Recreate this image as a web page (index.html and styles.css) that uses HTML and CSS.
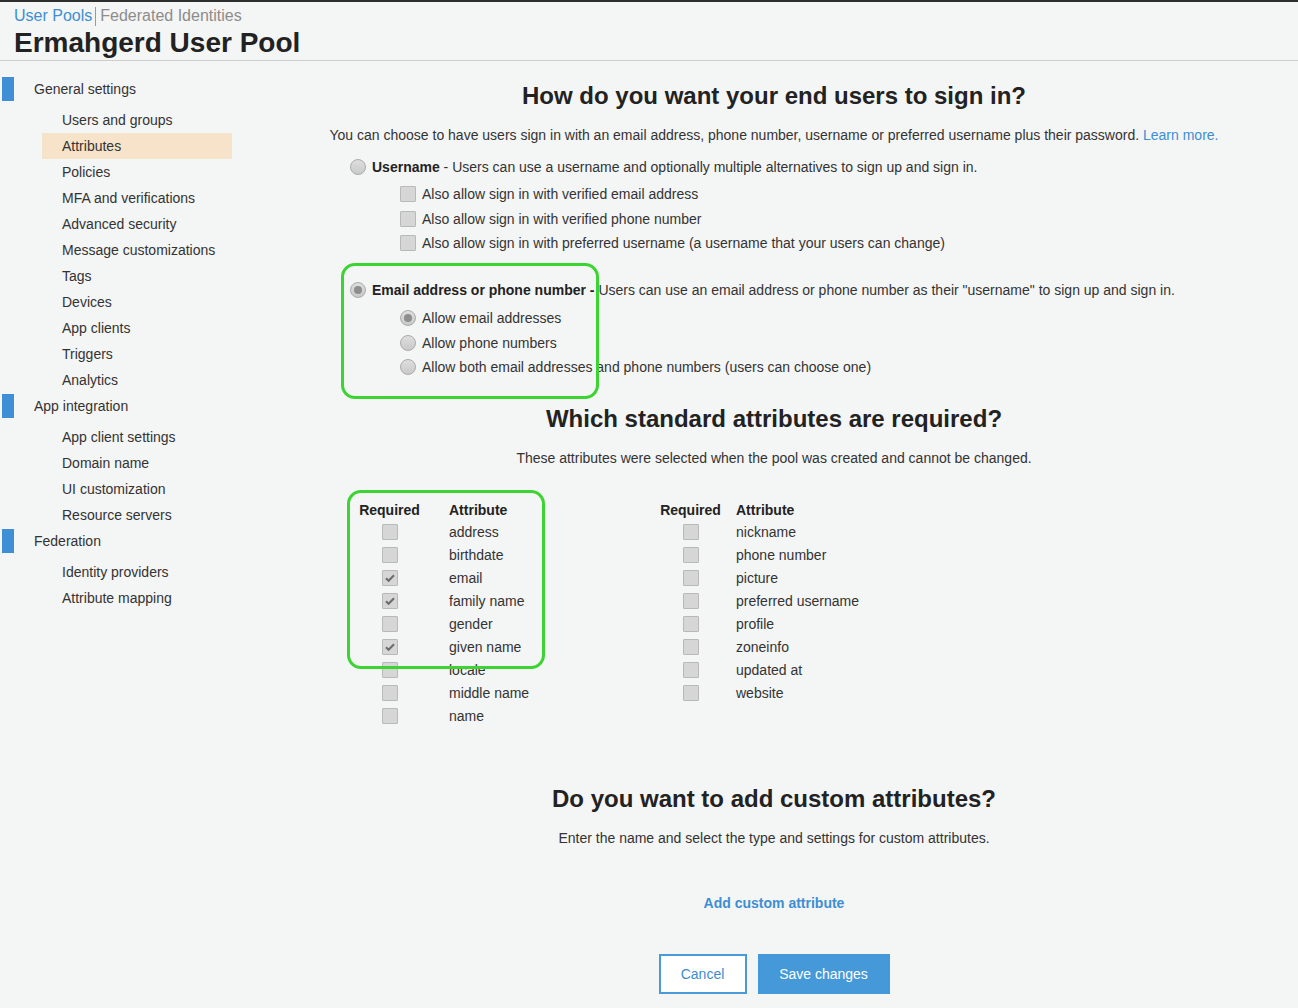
FILE: index.html
```html
<!DOCTYPE html>
<html lang="en">
<head>
<meta charset="utf-8">
<title>Ermahgerd User Pool - Attributes</title>
<link rel="stylesheet" href="styles.css">
</head>
<body>
<header class="top">
  <div class="tabs"><span class="tab-active">User Pools</span><span class="sep"></span><span class="tab">Federated Identities</span></div>
  <h1 class="title">Ermahgerd User Pool</h1>
</header>
<div class="layout">
  <nav class="sidebar">
    <div class="nav-head">General settings</div>
    <ul class="nav-list">
      <li class="nav-item">Users and groups</li>
      <li class="nav-item active">Attributes</li>
      <li class="nav-item">Policies</li>
      <li class="nav-item">MFA and verifications</li>
      <li class="nav-item">Advanced security</li>
      <li class="nav-item">Message customizations</li>
      <li class="nav-item">Tags</li>
      <li class="nav-item">Devices</li>
      <li class="nav-item">App clients</li>
      <li class="nav-item">Triggers</li>
      <li class="nav-item">Analytics</li>
    </ul>
    <div class="nav-head">App integration</div>
    <ul class="nav-list">
      <li class="nav-item">App client settings</li>
      <li class="nav-item">Domain name</li>
      <li class="nav-item">UI customization</li>
      <li class="nav-item">Resource servers</li>
    </ul>
    <div class="nav-head">Federation</div>
    <ul class="nav-list">
      <li class="nav-item">Identity providers</li>
      <li class="nav-item">Attribute mapping</li>
    </ul>
  </nav>

  <main class="content">
    <h2 class="heading">How do you want your end users to sign in?</h2>
    <p class="lead">You can choose to have users sign in with an email address, phone number, username or preferred username plus their password. <span class="link">Learn more.</span></p>

    <div class="options">
      <div class="opt"><span class="radio"></span><span><b>Username</b> - Users can use a username and optionally multiple alternatives to sign up and sign in.</span></div>
      <div class="sublist">
        <div class="opt opt-sub"><span class="check"></span>Also allow sign in with verified email address</div>
        <div class="opt opt-sub"><span class="check"></span>Also allow sign in with verified phone number</div>
        <div class="opt opt-sub"><span class="check"></span>Also allow sign in with preferred username (a username that your users can change)</div>
      </div>
      <div class="opt opt-gap"><span class="radio on"></span><span><b>Email address or phone number -</b> Users can use an email address or phone number as their "username" to sign up and sign in.</span></div>
      <div class="sublist sublist-b">
        <div class="opt opt-sub"><span class="radio on"></span>Allow email addresses</div>
        <div class="opt opt-sub"><span class="radio"></span>Allow phone numbers</div>
        <div class="opt opt-sub"><span class="radio"></span>Allow both email addresses and phone numbers (users can choose one)</div>
      </div>
    </div>

    <h2 class="heading heading-b">Which standard attributes are required?</h2>
    <p class="lead">These attributes were selected when the pool was created and cannot be changed.</p>

    <div class="tables">
      <div class="attr-table attr-left">
        <div class="attr-row head"><span class="req">Required</span><span class="attr-name">Attribute</span></div>
        <div class="attr-row"><span class="req"><span class="check"></span></span><span class="attr-name">address</span></div>
        <div class="attr-row"><span class="req"><span class="check"></span></span><span class="attr-name">birthdate</span></div>
        <div class="attr-row"><span class="req"><span class="check on"><svg viewBox="0 0 16 16" width="16" height="16"><path d="M4 8.2l2.6 2.6L12 5.2" fill="none" stroke="#6c6c6c" stroke-width="2"/></svg></span></span><span class="attr-name">email</span></div>
        <div class="attr-row"><span class="req"><span class="check on"><svg viewBox="0 0 16 16" width="16" height="16"><path d="M4 8.2l2.6 2.6L12 5.2" fill="none" stroke="#6c6c6c" stroke-width="2"/></svg></span></span><span class="attr-name">family name</span></div>
        <div class="attr-row"><span class="req"><span class="check"></span></span><span class="attr-name">gender</span></div>
        <div class="attr-row"><span class="req"><span class="check on"><svg viewBox="0 0 16 16" width="16" height="16"><path d="M4 8.2l2.6 2.6L12 5.2" fill="none" stroke="#6c6c6c" stroke-width="2"/></svg></span></span><span class="attr-name">given name</span></div>
        <div class="attr-row"><span class="req"><span class="check"></span></span><span class="attr-name">locale</span></div>
        <div class="attr-row"><span class="req"><span class="check"></span></span><span class="attr-name">middle name</span></div>
        <div class="attr-row"><span class="req"><span class="check"></span></span><span class="attr-name">name</span></div>
      </div>
      <div class="attr-table attr-right">
        <div class="attr-row head"><span class="req">Required</span><span class="attr-name">Attribute</span></div>
        <div class="attr-row"><span class="req"><span class="check"></span></span><span class="attr-name">nickname</span></div>
        <div class="attr-row"><span class="req"><span class="check"></span></span><span class="attr-name">phone number</span></div>
        <div class="attr-row"><span class="req"><span class="check"></span></span><span class="attr-name">picture</span></div>
        <div class="attr-row"><span class="req"><span class="check"></span></span><span class="attr-name">preferred username</span></div>
        <div class="attr-row"><span class="req"><span class="check"></span></span><span class="attr-name">profile</span></div>
        <div class="attr-row"><span class="req"><span class="check"></span></span><span class="attr-name">zoneinfo</span></div>
        <div class="attr-row"><span class="req"><span class="check"></span></span><span class="attr-name">updated at</span></div>
        <div class="attr-row"><span class="req"><span class="check"></span></span><span class="attr-name">website</span></div>
      </div>
    </div>

    <h2 class="heading heading-c">Do you want to add custom attributes?</h2>
    <p class="lead">Enter the name and select the type and settings for custom attributes.</p>

    <div class="add-link"><span class="link strong">Add custom attribute</span></div>

    <div class="actions">
      <button class="btn btn-cancel">Cancel</button>
      <button class="btn btn-save">Save changes</button>
    </div>

    <div class="mark mark-1"></div>
    <div class="mark mark-2"></div>
  </main>
</div>
</body>
</html>
```

FILE: styles.css
```css
* { box-sizing: border-box; }

body {
  margin: 0;
  background: #f4f5f5;
  font-family: "Liberation Sans", Arial, sans-serif;
  font-size: 14px;
  color: #333;
}

.top {
  border-top: 2px solid #2e2e2e;
  border-bottom: 1px solid #cdcdcd;
  padding: 4px 0 1px 14px;
}

.tabs {
  display: flex;
  align-items: center;
  font-size: 16px;
  line-height: 20px;
}

.tab-active { color: #3c8fd3; }

.sep {
  width: 1px;
  height: 19px;
  background: #9a9a9a;
  margin: 0 4px 0 3px;
}

.tab { color: #8c8c8c; }

.title {
  margin: 0;
  font-size: 28px;
  line-height: 33px;
  font-weight: bold;
  color: #222;
}

.layout { display: flex; }

.sidebar {
  width: 250px;
  flex: none;
  padding-top: 16px;
}

.nav-head {
  display: flex;
  align-items: center;
  height: 24px;
  color: #333;
}

.nav-head::before {
  content: "";
  width: 12px;
  height: 24px;
  background: #3e8fd5;
  margin: 0 20px 0 2px;
}

.nav-list {
  list-style: none;
  margin: 6px 0 1px;
  padding: 0;
}

.nav-item {
  margin-left: 42px;
  width: 190px;
  height: 26px;
  line-height: 26px;
  padding-left: 20px;
  color: #333;
}

.nav-item.active { background: #f6e3c9; }

.content {
  flex: 1;
  position: relative;
  padding-top: 20px;
  padding-bottom: 14px;
}

.heading {
  margin: 0;
  font-size: 24px;
  line-height: 30px;
  font-weight: bold;
  text-align: center;
  color: #222;
}

.heading-b { margin-top: 24.5px; }
.heading-c { margin-top: 56px; }

.lead {
  margin: 14px 0 0;
  line-height: 20px;
  text-align: center;
}

.link { color: #3c8fd3; }
.link.strong { font-weight: bold; }

.options { margin: 12px 0 0 100px; }

.opt {
  display: flex;
  align-items: center;
  height: 20px;
  line-height: 20px;
  white-space: nowrap;
}

.opt b { font-weight: bold; color: #222; }

.opt-gap { margin-top: 24.5px; }

.sublist { margin: 5px 0 0 50px; }
.sublist-b { margin-top: 6px; }

.opt-sub { height: 24.5px; }

.radio {
  flex: none;
  position: relative;
  width: 16px;
  height: 16px;
  margin-right: 6px;
  border-radius: 50%;
  border: 1px solid #aaa;
  background: linear-gradient(#dedede, #c9c9c9);
}

.radio.on::after {
  content: "";
  position: absolute;
  inset: 3px;
  border-radius: 50%;
  background: #8e8e8e;
}

.check {
  flex: none;
  display: inline-flex;
  width: 16px;
  height: 16px;
  margin-right: 6px;
  border: 1px solid #b9b9b9;
  border-radius: 1px;
  background: #d6d6d6;
}

.check svg { margin: -1px; }

.tables {
  display: flex;
  margin: 30.5px 0 0 109px;
}

.attr-left { width: 301px; }

.attr-row {
  display: flex;
  align-items: center;
  height: 23px;
}

.attr-row.head { height: 22px; }

.req {
  width: 61px;
  flex: none;
  display: flex;
  justify-content: center;
}

.req .check { margin-right: 0; }

.head { font-weight: bold; color: #222; }

.attr-left .attr-name { margin-left: 29px; }
.attr-right .attr-name { margin-left: 15px; }

.add-link {
  margin-top: 45px;
  line-height: 20px;
  text-align: center;
}

.actions {
  display: flex;
  justify-content: center;
  gap: 11px;
  margin-top: 41px;
}

.btn {
  height: 40px;
  font-family: inherit;
  font-size: 14px;
  cursor: pointer;
}

.btn-cancel {
  width: 88px;
  background: #fff;
  border: 2px solid #4a9ad7;
  color: #3f8bcf;
}

.btn-save {
  width: 132px;
  background: #4599d8;
  border: none;
  color: #fff;
}

.mark {
  position: absolute;
  border: 3px solid #3bd430;
  border-radius: 14px;
  pointer-events: none;
}

.mark-1 { left: 91px; top: 202px; width: 258px; height: 136px; }
.mark-2 { left: 97px; top: 429px; width: 198px; height: 179px; }
```
